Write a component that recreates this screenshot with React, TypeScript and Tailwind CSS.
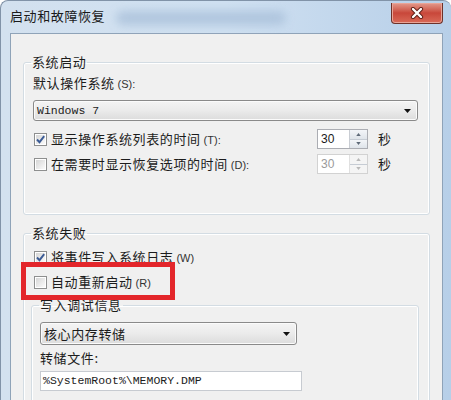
import React from "react";

const cjk = "font-['Microsoft_YaHei','Noto_Sans_CJK_SC',sans-serif]";
const mono = "font-['Liberation_Mono',monospace]";

const CheckBox: React.FC<{ checked?: boolean }> = ({ checked }) => (
  <div className="flex h-[13px] w-[13px] shrink-0 items-center justify-center border border-[#8e8f8f] bg-white">
    <div className="relative h-[9px] w-[9px] bg-gradient-to-br from-[#d6d6d6] to-[#fbfbfb]">
      {checked && (
        <svg viewBox="0 0 11 11" className="absolute -left-[1px] -top-[1px] h-[11px] w-[11px]">
          <path d="M2 5.5 L4.5 8.2 L9.2 2.2" fill="none" stroke="#3b5b95" strokeWidth="1.9" />
        </svg>
      )}
    </div>
  </div>
);

const Spin: React.FC<{ disabled?: boolean }> = ({ disabled }) => (
  <div
    className={`flex h-[20px] w-[51px] border ${
      disabled ? "border-[#d2d2d2] text-[#9a9a9a]" : "border-[#abadb3] text-[#1a1a1a]"
    } bg-white`}
  >
    <div className="flex flex-1 items-center pl-[3px] font-['Liberation_Sans',sans-serif] text-[12px] tracking-normal">30</div>
    <div className={`flex w-[18px] flex-col border-l ${disabled ? "border-[#e0e0e0]" : "border-[#c9cdd3]"}`}>
      {[0, 1].map((i) => (
        <div
          key={i}
          className={`flex flex-1 items-center justify-center ${
            disabled ? "bg-[#f4f4f4]" : "bg-gradient-to-b from-[#f3f5f8] to-[#dfe4ea]"
          } ${i === 0 ? "border-b border-[#c6ccd4]" : ""}`}
        >
          <svg viewBox="0 0 6 4" className="h-[3px] w-[5px]">
            <path d={i === 0 ? "M0 4 L3 0 L6 4 Z" : "M0 0 L3 4 L6 0 Z"} fill={disabled ? "#b8b8b8" : "#5f6a78"} />
          </svg>
        </div>
      ))}
    </div>
  </div>
);

const Combo: React.FC<{ text: string; className: string; textClass: string }> = ({ text, className, textClass }) => (
  <div
    className={`flex items-center rounded-[3px] border border-[#8a8a8a] bg-gradient-to-b from-[#f4f4f4] via-[#ebebeb] to-[#dcdcdc] shadow-[inset_0_0_0_1px_#fbfbfb] ${className}`}
  >
    <span className={`flex-1 pl-[3px] ${textClass}`}>{text}</span>
    <svg viewBox="0 0 7 4" className="mr-[6px] h-[4px] w-[7px]">
      <path d="M0 0 L7 0 L3.5 4 Z" fill="#111" />
    </svg>
  </div>
);

const Latin: React.FC<{ children: React.ReactNode }> = ({ children }) => (
  <span className="ml-[3px] font-['Liberation_Sans',sans-serif] text-[11px] tracking-normal text-[#333]">{children}</span>
);

export default function App() {
  return (
    <div className={`relative h-[400px] w-[451px] overflow-hidden bg-white ${cjk} text-[13px] tracking-[0.6px] text-[#1c1c1c]`}>
      <div className="flex h-full flex-col rounded-tl-[8px] rounded-tr-[8px] border-l border-t border-[#8193a8] bg-gradient-to-r from-[#d3e1ef] via-[#cfe0f1] to-[#b7cfe8]">
        {/* title bar */}
        <div className="relative flex h-[32px] shrink-0 items-start justify-between">
          <div className="absolute left-[115px] top-[10px] h-[14px] w-[170px] rounded-full bg-[#a9c0da] opacity-80 blur-[5px]" />
          <div className="relative ml-[9px] mt-[6px] leading-[18px] text-[#1a1a1a]">启动和故障恢复</div>
          <div className="mr-[8px] mt-[2px] flex h-[21px] w-[52px] items-center justify-center rounded-b-[4px] border border-t-0 border-[#6d3129] bg-gradient-to-b from-[#e39a8d] via-[#c8473a] to-[#d96a58] shadow-[inset_0_0_0_1px_#e9a497]">
            <svg viewBox="0 0 14 12" className="h-[12px] w-[14px]">
              <path d="M3 2 L11 10 M11 2 L3 10" stroke="#5d1e16" strokeWidth="4.2" strokeLinecap="round" />
              <path d="M3 2 L11 10 M11 2 L3 10" stroke="#ffffff" strokeWidth="2.4" strokeLinecap="round" />
            </svg>
          </div>
        </div>

        {/* client area */}
        <div className="flex flex-1">
          <div className="ml-[9px] mr-[8px] flex-1 border border-[#8fa3b8] bg-[#f0f0f0] pl-[12px] pr-[11px] pt-[20px]">
            {/* 系统启动 */}
            <fieldset className="w-[407px] rounded-[3px] border border-[#d3dce3] px-[9px] pb-[40px] shadow-[inset_0_0_0_1px_#ffffff]">
              <legend className="-ml-[2px] px-[1px] leading-[16px]">系统启动</legend>
              <div className="mt-[5px] leading-[16px]">
                默认操作系统<Latin>(S):</Latin>
              </div>
              <Combo text="Windows 7" className="mt-[8px] h-[21px] w-[385px]" textClass={`${mono} text-[11.5px] tracking-normal`} />
              <div className="mt-[8px] flex h-[20px] items-center">
                <div className="flex w-[284px] items-center">
                  <div className="ml-[1px]">
                    <CheckBox checked />
                  </div>
                  <span className="ml-[4px]">
                    显示操作系统列表的时间<Latin>(T):</Latin>
                  </span>
                </div>
                <Spin />
                <span className="ml-[10px]">秒</span>
              </div>
              <div className="mt-[5px] flex h-[20px] items-center">
                <div className="flex w-[284px] items-center">
                  <div className="ml-[1px]">
                    <CheckBox />
                  </div>
                  <span className="ml-[4px]">
                    在需要时显示恢复选项的时间<Latin>(D):</Latin>
                  </span>
                </div>
                <Spin disabled />
                <span className="ml-[10px]">秒</span>
              </div>
            </fieldset>

            {/* 系统失败 */}
            <fieldset className="mt-[10px] w-[407px] rounded-[3px] border border-[#d3dce3] px-[9px] pb-[20px] shadow-[inset_0_0_0_1px_#ffffff]">
              <legend className="-ml-[2px] px-[1px] leading-[16px]">系统失败</legend>
              <div className="mt-[6px] flex h-[20px] items-center">
                <div className="ml-[1px]">
                  <CheckBox checked />
                </div>
                <span className="ml-[4px]">
                  将事件写入系统日志<Latin>(W)</Latin>
                </span>
              </div>
              <div className="mt-[5px] flex h-[20px] items-center">
                <div className="ml-[1px]">
                  <CheckBox />
                </div>
                <span className="ml-[4px]">
                  自动重新启动<Latin>(R)</Latin>
                </span>
              </div>

              <fieldset className="-ml-[2px] mt-[5px] w-[388px] rounded-[3px] border border-[#d3dce3] pb-[20px] pl-[8px] shadow-[inset_0_0_0_1px_#ffffff]">
                <legend className="-ml-[1px] px-[1px] leading-[16px]">写入调试信息</legend>
                <Combo text="核心内存转储" className="mt-[9px] h-[23px] w-[257px]" textClass="" />
                <div className="mt-[5px] leading-[16px]">转储文件:</div>
                <div className={`mt-[5px] flex h-[20px] w-[262px] items-center border border-[#c7cbd1] bg-white pl-[2px] ${mono} text-[11.5px] tracking-normal`}>
                  %SystemRoot%\MEMORY.DMP
                </div>
              </fieldset>
            </fieldset>
          </div>
        </div>
      </div>

      {/* red highlight annotation */}
      <div className="absolute left-[21px] top-[262px] h-[38px] w-[154px] border-[5px] border-[#e3262b]" />
    </div>
  );
}
